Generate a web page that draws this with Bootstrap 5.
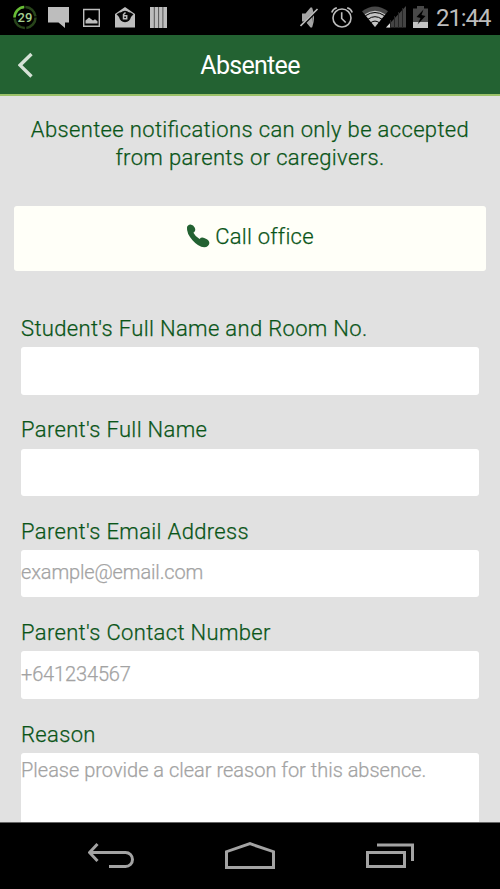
<!DOCTYPE html>
<html lang="en">
<head>
    <meta charset="UTF-8">
    <meta name="viewport" content="width=device-width, initial-scale=1">
    <title>Absentee</title>
    <link href="https://cdn.jsdelivr.net/npm/bootstrap@5.3.0/dist/css/bootstrap.min.css" rel="stylesheet">
    <style>
        body { font-family: Roboto, "Liberation Sans", sans-serif; font-weight: 300; background: #e1e1e1; color: #0a5518; font-feature-settings: "liga" 1; }
        main { -webkit-text-stroke: .25px; }
        svg { display: block; flex: none; }
        .status-bar { height: 35px; background: #000; color: #bdbdbd; padding-left: 13px; padding-right: 8px; }
        .clock { width: 56px; margin-left: 7px; font-weight: 400; }
        .app-bar { height: 61px; background: #236232; border-bottom: 2px solid #9cc169; color: #fff; }
        .app-title { font-size: 25px; font-weight: 400; line-height: 59px; width: 100px; padding-top: 2px; white-space: nowrap; letter-spacing: -.7px; }
        .side { width: 200px; padding-left: 18px; }
        .intro { font-size: 22px; line-height: 28px; padding-top: 20px; margin-bottom: 34px; letter-spacing: .35px; }
        .btn-call, .btn-call:hover { height: 65px; margin: 0 14px 44px; background: #fffff8; color: #0a5518; border: 0; border-radius: 3px; font-size: 22px; font-weight: 300; line-height: 28px; padding: 0 0 3px; letter-spacing: .25px; }
        .call-icon { margin: 0 5px 3px 0; }
        .field { margin: 0 21px 21.8px; }
        .form-label { display: block; font-size: 22px; line-height: 28px; margin-bottom: 4.3px; letter-spacing: .34px; }
        .form-control, .form-control:focus { height: 47.3px; border: 0; border-radius: 3px; padding: 0 0 3px; font-size: 20px; font-weight: 300; line-height: 27px; letter-spacing: -.14px; box-shadow: none; }
        .form-control::placeholder { color: #a3a3a3; }
        textarea.form-control { height: 130px; padding-top: 4px; resize: none; letter-spacing: 0; }
        .nav-keys { height: 67px; background: #000; border-top: 1px solid #666; padding: 0 86px 1px 88px; }
        .home-key { margin-right: 2px; }
    </style>
</head>
<body>
<div class="vh-100 d-flex flex-column overflow-hidden">
    <!-- Status bar -->
    <div class="status-bar d-flex flex-shrink-0 justify-content-between">
        <div class="d-flex">
            <svg width="35" height="35" viewBox="13 0 35 35">
                <circle cx="25" cy="17.5" r="10.5" fill="none" stroke="#28451a" stroke-width="2.5" stroke-dasharray="15 1.5"/>
                <path d="M14.5 17.5A10.5 10.5 0 0 1 24.3 7" fill="none" stroke="#68bd35" stroke-width="2.5"/>
                <text x="25" y="22.3" text-anchor="middle" font-size="13" font-weight="500" fill="#a5cf91">29</text>
            </svg>
            <svg width="35" height="35" viewBox="48 0 35 35"><path d="M48 7h21v15.500h-4V28l-6.500-5.500H48z" fill="#bdbdbd"/></svg>
            <svg width="32" height="35" viewBox="83 0 32 35">
                <path d="M83.700 9.500h15.600v16.800H83.700z" fill="none" stroke="#bdbdbd" stroke-width="1.400"/>
                <path d="M85.500 23.500v-3l3.500-3 4 3 2-1.300 2.500 2v2.300z" fill="#bdbdbd"/>
            </svg>
            <svg width="35" height="35" viewBox="115 0 35 35">
                <path d="M115 14l10-7 10 7v13.500h-20z" fill="#bdbdbd"/>
                <path d="M116.500 14.200l3-1.700h11l3 1.700-5.500 6q-3 2.300-6 0z" fill="#080808"/>
                <circle cx="125" cy="16.500" r="5.800" fill="#080808"/>
                <path d="M125.500 12.500l-2 2v4.300h3.200v-3h-3.200" fill="none" stroke="#bdbdbd" stroke-width="1.500"/>
            </svg>
            <svg width="17" height="35" viewBox="150 0 17 35">
                <path d="M150 7h17v21h-17z" fill="#bdbdbd"/>
                <path d="M154.300 7v21M158.600 7v21M162.900 7v21" stroke="#555" stroke-width="1"/>
            </svg>
        </div>
        <div class="d-flex">
            <svg width="31" height="35" viewBox="300 0 31 35">
                <path d="M302 13.500h3.500l5-6h1.500v20h-1.500l-5-6H302z" fill="#a5a5a5"/>
                <path d="M311.500 8q3.500 9.500 0 19" fill="none" stroke="#a5a5a5" stroke-width="1.500"/>
                <path d="M301 26.500L318 9.500" stroke="#000" stroke-width="2.500"/>
                <path d="M300.500 26L317.500 9" stroke="#bdbdbd" stroke-width="1.600"/>
            </svg>
            <svg width="31" height="35" viewBox="331 0 31 35">
                <g fill="none" stroke="#bdbdbd" stroke-width="1.600">
                    <circle cx="342" cy="18" r="9"/>
                    <path d="M341.700 12.300v6.200l4 4M331.800 12.500q1-3.500 5-4.700M352.200 12.500q-1-3.500-5-4.700"/>
                </g>
            </svg>
            <svg width="51" height="35" viewBox="362 0 51 35">
                <path d="M362 11.200q13-9.400 26 0L375 27z" fill="#484848"/>
                <path d="M364.700 14.300q10.300-7.200 20.600 0L375 27z" fill="#c4c4c4"/>
                <path d="M365.500 15.700q9.500-6.400 19 0M368 19.200q7-5 14 0M370.700 22.700q4.300-3.200 8.600 0" fill="none" stroke="#000" stroke-width="1"/>
                <path d="M386 27.500L406 6v21.500z" fill="#444"/>
                <path d="M386 27.500l4-4.300v4.300z" fill="#ddd"/>
                <path d="M390.500 20v8M394.500 16v12M398.500 12v16M402.500 8v20" stroke="#252525" stroke-width="1"/>
            </svg>
            <svg width="16" height="35" viewBox="413 0 16 35">
                <path d="M413 8.500h4V6h7v2.500h4V28h-15z" fill="#484848"/>
                <path d="M413 22h15v6h-15z" fill="#c4c4c4"/>
                <path d="M423.500 9.500l-7 7.500 4 1-3 6.500 8-8.500-4-1z" fill="#000"/>
            </svg>
            <div class="clock"><svg width="56" height="35"><text x="0" y="26.200" font-size="24" textLength="55.500" fill="#bdbdbd">21:44</text></svg></div>
        </div>
    </div>

    <!-- Title bar -->
    <header class="app-bar d-flex flex-shrink-0 align-items-center">
        <div class="side">
            <svg width="16" height="26" viewBox="0 0 16 26"><path d="M13.500 2L2 13.200 13.500 24.500" fill="none" stroke="#d5e1d6" stroke-width="3.400"/></svg>
        </div>
        <div class="app-title text-center">Absentee</div>
    </header>

    <!-- Form -->
    <main class="flex-grow-1 overflow-hidden d-flex flex-column">
        <p class="intro text-center">Absentee notifications can only be accepted<br>from parents or caregivers.</p>
        <button type="button" class="btn btn-call d-flex flex-shrink-0 align-items-center justify-content-center">
            <svg class="call-icon" width="24" height="24" viewBox="0 0 24 24"><path d="M1 3.500Q1.300.8 4.600.5 7.500.7 8.800 3.700q1.400 3-1.400 5 2 4 6.200 6.200 1.700-2 4.600-1 5 1.500 5.200 5-.6 4-5.200 4.300-6-.4-11.700-7Q.4 9.300 1 3.500z" fill="#236232"/></svg>
            <span>Call office</span>
        </button>
        <div class="field">
            <label class="form-label" for="student">Student's Full Name and Room No.</label>
            <input type="text" class="form-control" id="student">
        </div>
        <div class="field">
            <label class="form-label" for="parent">Parent's Full Name</label>
            <input type="text" class="form-control" id="parent">
        </div>
        <div class="field">
            <label class="form-label" for="email">Parent's Email Address</label>
            <input type="email" class="form-control" id="email" placeholder="example@email.com">
        </div>
        <div class="field">
            <label class="form-label" for="phone">Parent's Contact Number</label>
            <input type="tel" class="form-control" id="phone" placeholder="+641234567">
        </div>
        <div class="field">
            <label class="form-label" for="reason">Reason</label>
            <textarea class="form-control" id="reason" placeholder="Please provide a clear reason for this absence."></textarea>
        </div>
    </main>

    <!-- Navigation keys -->
    <div class="nav-keys d-flex flex-shrink-0 align-items-center justify-content-between">
        <svg width="47" height="28" viewBox="88 844 47 28"><path d="M97.500 846l-8 8.500 8 8.500M90 854.500h35.500a7 7 0 0 1 0 14H109" fill="none" stroke="#a3a3a3" stroke-width="3"/></svg>
        <svg class="home-key" width="50" height="28" viewBox="225 843 50 28"><path d="M226.500 868.500v-15.800l23.500-8 23.500 8v15.800z" fill="none" stroke="#a3a3a3" stroke-width="3"/></svg>
        <svg width="48" height="28" viewBox="366 844 48 28"><path d="M367.500 854.500h37v14h-37zM377 847h35.500v16" fill="none" stroke="#a3a3a3" stroke-width="3"/></svg>
    </div>
</div>
<script src="https://cdn.jsdelivr.net/npm/bootstrap@5.3.0/dist/js/bootstrap.bundle.min.js"></script>
</body>
</html>
